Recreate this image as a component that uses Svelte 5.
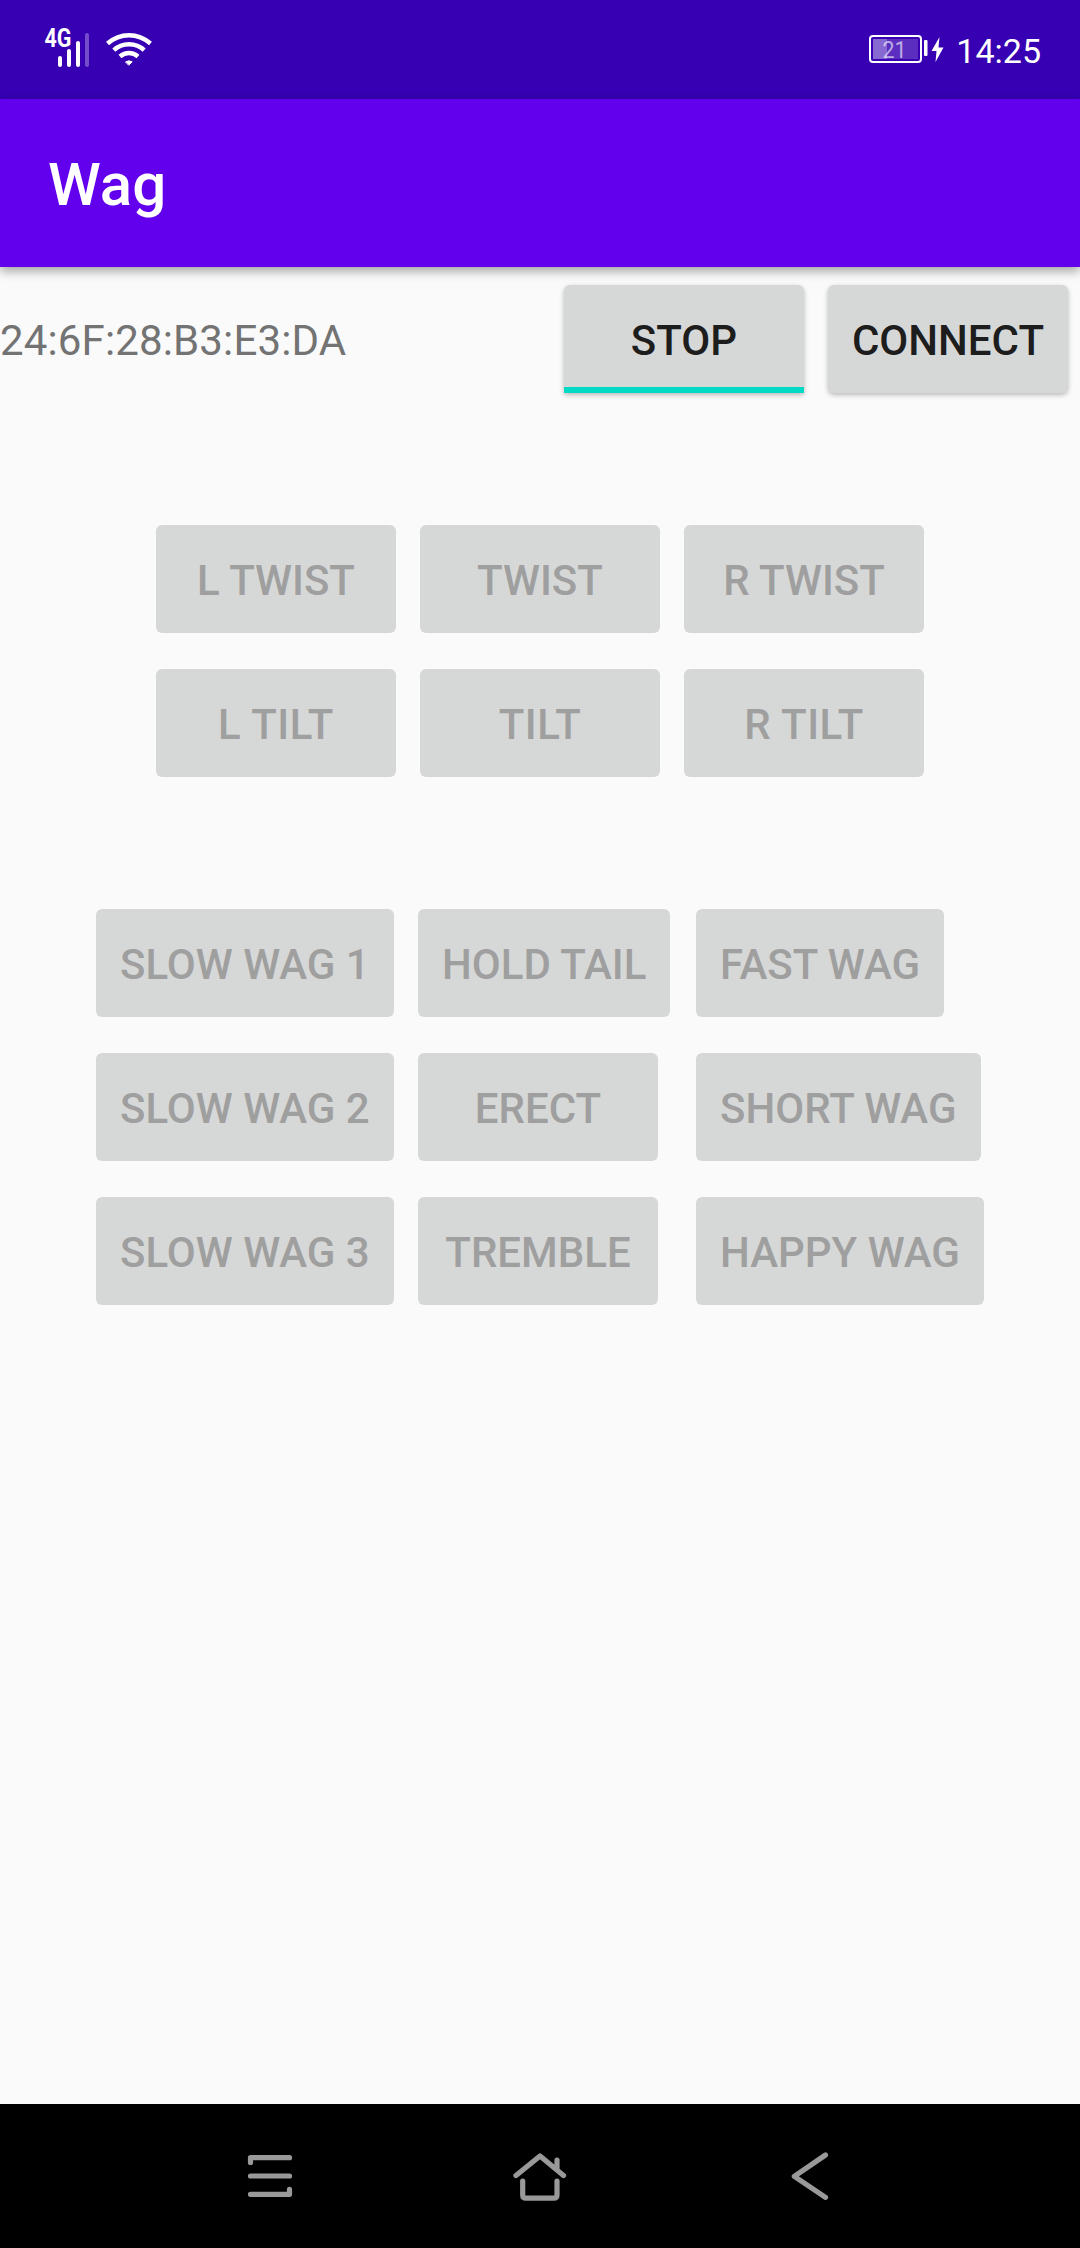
<script>
  const twistRows = [
    ['L TWIST', 'TWIST', 'R TWIST'],
    ['L TILT', 'TILT', 'R TILT'],
  ];
  const wagRows = [
    ['SLOW WAG 1', 'HOLD TAIL', 'FAST WAG'],
    ['SLOW WAG 2', 'ERECT', 'SHORT WAG'],
    ['SLOW WAG 3', 'TREMBLE', 'HAPPY WAG'],
  ];
</script>

<div class="screen">
  <header class="status">
    <svg class="network" width="124" height="60" viewBox="40 14 124 60" fill="none" stroke="#fff" stroke-linecap="round">
      <text class="tech" x="44.500" y="46.800" textLength="27" lengthAdjust="spacingAndGlyphs">4G</text>
      <g stroke-width="4">
        <path d="M60 58v7M69 51v14M78 43v22" />
        <path d="M87 35v30" stroke-opacity=".3" />
      </g>
      <g stroke-width="4.400" stroke-linecap="butt">
        <path d="M107.500 43.500Q117 35.200 129 35.200T150.500 43.500" />
        <path d="M113.800 50.200Q120 44.200 129 44.200T144.200 50.200" />
        <path d="M120 56.500Q124 53 129 53T138 56.500" />
      </g>
      <path d="M125.800 61.800Q129 59.800 132.200 61.800L129 65Z" fill="#fff" stroke-width="1" stroke-linejoin="round" />
    </svg>
    <div class="power">
      <svg width="78" height="30" viewBox="870 34 78 30">
        <rect x="872" y="36" width="51" height="26" rx="3" fill="none" stroke="#fff" stroke-width="2" />
        <rect x="875" y="39" width="45" height="20" fill="#fff" fill-opacity=".18" />
        <rect x="875" y="39" width="14" height="20" fill="#fff" fill-opacity=".28" />
        <text class="level" x="884.500" y="57.800" textLength="24" lengthAdjust="spacingAndGlyphs">21</text>
        <rect x="926" y="40" width="3.500" height="16" rx="1" fill="#fff" />
        <path d="M941.500 37L933.500 51H938.500L937.500 62L945.500 47.500H940.500Z" fill="#fff" />
      </svg>
      <span class="clock">14:25</span>
    </div>
  </header>

  <div class="appbar"><h1>Wag</h1></div>

  <main>
    <section class="device">
      <span class="address">24:6F:28:B3:E3:DA</span>
      <button class="btn raised toggle">STOP</button>
      <button class="btn raised">CONNECT</button>
    </section>

    <section class="grid twist">
      {#each twistRows.flat() as label}
        <button class="btn" class:loose={label.includes('TILT')} disabled>{label}</button>
      {/each}
    </section>

    <section class="grid wag">
      {#each wagRows.flat() as label}
        <button class="btn" disabled>{label}</button>
      {/each}
    </section>
  </main>

  <nav>
    <svg width="100" height="110" viewBox="0 0 100 110">
      <path d="M30.500 42.500V37.700H69.500M30.500 56H69.500M30.500 74.300H69.500V69.300" />
    </svg>
    <svg width="100" height="110" viewBox="0 0 100 110">
      <path d="M26 55.500L50 36L73.500 55.500M67 40V49M32.700 61V75Q32.700 78.200 36 78.200H63.700Q67 78.200 67 75V61" />
    </svg>
    <svg width="100" height="110" viewBox="0 0 100 110">
      <path d="M55.500 35L24.300 56.300L55.500 77.300" />
    </svg>
  </nav>
</div>

<style>
  :global(body) {
    margin: 0;
    background: #fafafa;
  }
  .screen {
    display: flex;
    flex-direction: column;
    width: 1080px;
    height: 2248px;
    background: #fafafa;
    font-family: Roboto, 'Liberation Sans', sans-serif;
    overflow: hidden;
  }
  .status {
    display: flex;
    justify-content: space-between;
    height: 99px;
    box-sizing: border-box;
    padding: 0 39px 0 40px;
    background: #3700b3;
    color: #fff;
    flex: none;
  }
  .network {
    margin-top: 14px;
  }
  .tech {
    font-size: 25px;
    font-weight: 700;
    fill: #fff;
    stroke: none;
  }
  .power {
    display: flex;
    align-items: flex-start;
  }
  .power svg {
    margin-top: 34px;
    overflow: visible;
  }
  .level {
    font-size: 24px;
    fill: #fff;
    fill-opacity: .6;
  }
  .clock {
    margin: 31px 0 0 10px;
    font-size: 34px;
    line-height: 40px;
  }
  .appbar {
    display: flex;
    align-items: center;
    flex: none;
    height: 168px;
    box-sizing: border-box;
    padding: 3px 48px 0;
    background: #6200ee;
    color: #fff;
    box-shadow: 0 4px 10px rgba(0, 0, 0, .36);
  }
  h1 {
    margin: 0;
    font-size: 60px;
    font-weight: 500;
    line-height: 70px;
  }
  main {
    flex: 1;
  }
  .device {
    display: flex;
    align-items: center;
    gap: 24px;
    padding: 18px 12px 0 0;
  }
  .address {
    flex: 1;
    padding-top: 3px;
    font-size: 42px;
    line-height: 50px;
    letter-spacing: .14px;
    color: #737373;
  }
  .btn {
    min-width: 240px;
    height: 108px;
    box-sizing: border-box;
    padding: 3px 24px 0;
    border: 0;
    border-radius: 6px;
    background: #d6d8d7;
    color: #9f9f9f;
    font: 500 42px/50px Roboto, 'Liberation Sans', sans-serif;
    white-space: nowrap;
  }
  .loose {
    letter-spacing: .5px;
  }
  .raised {
    color: #1d1d1d;
    box-shadow: 0 2px 5px rgba(0, 0, 0, .26);
  }
  .toggle {
    border-radius: 6px 6px 0 0;
    background: linear-gradient(#03dac5, #03dac5) bottom / 100% 6px no-repeat #d6d8d7;
  }
  .grid {
    display: grid;
    justify-items: start;
    gap: 36px 24px;
  }
  .twist {
    grid-template-columns: repeat(3, 240px);
    justify-content: center;
    margin-top: 132px;
  }
  .wag {
    grid-template-columns: 298px 254px auto;
    padding-left: 96px;
    margin-top: 132px;
  }
  nav {
    display: flex;
    flex: none;
    align-items: center;
    gap: 170px;
    height: 144px;
    box-sizing: border-box;
    padding: 0 0 2px 220px;
    background: #000;
  }
  nav svg {
    fill: none;
    stroke: #999;
    stroke-width: 5.200;
    stroke-linecap: round;
    stroke-linejoin: round;
  }
  nav svg:last-child {
    margin-left: 10px;
  }
</style>
